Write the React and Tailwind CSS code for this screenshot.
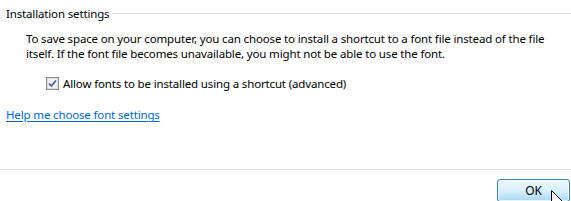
export default function App() {
  return (
    <div className="relative w-[571px] h-[201px] overflow-hidden bg-white text-[11.5px] tracking-[-0.15px] leading-[15px] text-black font-['Segoe_UI','Noto_Sans',sans-serif]">
      <div className="flex items-center pl-[6px] pt-[6px]">
        <span>Installation settings</span>
        <div className="ml-[3px] mt-[-1px] h-px flex-1 bg-[#d5dfe5]" />
      </div>

      <p className="mt-[10px] whitespace-nowrap pl-[26px]">
        To save space on your computer, you can choose to install a shortcut to a font file instead of the file
        <br />
        itself. If the font file becomes unavailable, you might not be able to use the font.
      </p>

      <label className="mt-[15px] flex items-center pl-[46px]">
        <span className="flex h-[13px] w-[13px] items-center justify-center border border-[#8e8f8f] bg-gradient-to-br from-[#dcdcdc] to-[#fbfbfb]">
          <svg width="11" height="11" viewBox="0 0 11 11">
            <rect x="0" y="0" width="11" height="11" fill="#f2f4f6" stroke="#c4c8cc" strokeWidth="1" />
            <path d="M2 5.5 L4.3 8 L9 2.5" fill="none" stroke="#4a5f97" strokeWidth="1.8" />
          </svg>
        </span>
        <span className="ml-[4px]">Allow fonts to be installed using a shortcut (advanced)</span>
      </label>

      <a href="#" className="mt-[16px] ml-[6px] inline-block text-[#0066cc] underline underline-offset-[2px]">
        Help me choose font settings
      </a>

      <div className="mt-[47px] h-px w-full bg-[#dfdfdf]" />

      <div className="flex justify-end pr-[1px] pt-[9px]">
        <button className="h-[23px] w-[73px] rounded-[3px] border border-[#3c7fb1] bg-gradient-to-b from-[#eaf6fd] via-[#d9f0fc] to-[#a7d9f5] text-center text-[12px] shadow-[inset_0_0_0_1px_#ffffffb0]">
          OK
        </button>
      </div>

      <svg className="absolute left-[551px] top-[190px]" width="13" height="20" viewBox="0 0 13 20">
        <path d="M0.5 0.5 L0.5 16.5 L4.5 12.5 L7.5 18.5 L9.5 17.5 L6.5 11.5 L11.5 11.5 Z" fill="#fff" stroke="#000" strokeWidth="1" />
      </svg>
    </div>
  );
}
